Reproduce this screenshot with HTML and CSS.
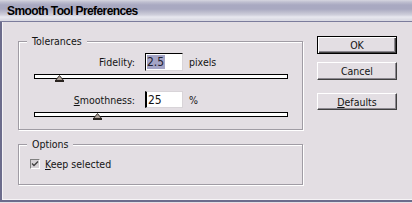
FILE: index.html
```html
<!DOCTYPE html>
<html>
<head>
<meta charset="utf-8">
<link rel="stylesheet" href="styles.css">
</head>
<body>
<div class="window">
  <div class="titlebar"><span class="title">Smooth Tool Preferences</span></div>
  <div class="body">
    <div class="main">
      <div class="group tol">
        <span class="glabel">Tolerances</span>
        <div class="row r1">
          <span class="lbl">Fidelity:</span>
          <div class="field f1"><span class="sel">2.5</span></div>
          <span class="unit">pixels</span>
        </div>
        <div class="slider s1">
          <div class="track"></div>
          <svg class="thumb" style="left:21px" width="9" height="7" viewBox="0 0 9 7"><path d="M4.5 0.5 L8.5 5.5 L0.5 5.5 Z" fill="#a89c94" stroke="#3a3430" stroke-width="1"/><rect x="0" y="5" width="9" height="2" fill="#2a2420"/></svg>
        </div>
        <div class="row r2">
          <span class="lbl"><u>S</u>moothness:</span>
          <div class="field f2">25</div>
          <span class="unit">%</span>
        </div>
        <div class="slider s2">
          <div class="track"></div>
          <svg class="thumb" style="left:59px" width="9" height="7" viewBox="0 0 9 7"><path d="M4.5 0.5 L8.5 5.5 L0.5 5.5 Z" fill="#a89c94" stroke="#3a3430" stroke-width="1"/><rect x="0" y="5" width="9" height="2" fill="#2a2420"/></svg>
        </div>
      </div>
      <div class="group opt">
        <span class="glabel">Options</span>
        <div class="check-row">
          <span class="checkbox"><svg width="8" height="8" viewBox="0 0 8 8"><path d="M1 3.5 L3 5.5 L7 1.5" fill="none" stroke="#404040" stroke-width="1.3"/></svg></span>
          <span class="ctext"><u>K</u>eep selected</span>
        </div>
      </div>
    </div>
    <div class="buttons">
      <div class="btn default">OK</div>
      <div class="btn cancel">Cancel</div>
      <div class="btn defaults"><u>D</u>efaults</div>
    </div>
  </div>
</div>
</body>
</html>
```
FILE: styles.css
```css
html, body {
  margin: 0;
  padding: 0;
  background: #e3dee3;
}
.window {
  width: 412px;
  height: 203px;
  background: #e3dee3;
  overflow: hidden;
  font-family: "DejaVu Sans Condensed", "DejaVu Sans", sans-serif;
  font-stretch: condensed;
  font-size: 10.5px;
  color: #141414;
}
.titlebar {
  height: 21px;
  border-bottom: 1px solid #7c7c9c;
  background: linear-gradient(#d6d6e0 0px, #bfbfd0 2px, #a9a9c1 5px, #a9a9c1 9px, #bcbccd 12px, #d0d0dc 15px, #e8e8ef 17px, #dadae3 20px);
  box-sizing: content-box;
}
.title {
  display: block;
  padding: 4px 0 0 7px;
  font-family: "Liberation Sans", sans-serif;
  font-stretch: normal;
  font-weight: bold;
  font-size: 12px;
  line-height: 15px;
  letter-spacing: -0.6px;
  color: #000;
}
.body {
  display: flex;
  height: 178px;
  border-left: 2px solid #6c6c8c;
  border-bottom: 2px solid #6c6c8c;
  box-shadow: inset 1px -1px 0 #f6f4f6;
  padding-left: 16px;
  box-sizing: content-box;
}
.main {
  display: flex;
  flex-direction: column;
  gap: 14px;
  padding-top: 19px;
  width: 285px;
}
.group {
  position: relative;
  border: 1px solid #a09ca4;
  box-shadow: 1px 1px 0 #fff, inset 1px 1px 0 #fff;
}
.glabel {
  position: absolute;
  top: -7px;
  left: 8px;
  padding: 0 5px;
  background: #e3dee3;
  line-height: 13px;
}
.tol {
  padding-bottom: 12px;
}
.row {
  display: flex;
  align-items: center;
}
.r1 {
  margin-top: 11px;
  height: 18px;
}
.r2 {
  margin-top: 12px;
  height: 17px;
}
.lbl {
  width: 116px;
  text-align: right;
}
.field {
  margin-left: 10px;
  width: 38px;
  height: 100%;
  box-sizing: border-box;
  background: #fff;
  display: flex;
  align-items: center;
  padding-left: 1px;
  font-size: 12px;
}
.f1 {
  border-top: 1px solid #000;
  border-left: 1px solid #000;
  border-right: 1px solid #d8d4d8;
  border-bottom: 1px solid #d8d4d8;
}
.f2 {
  border: 1px solid #d8d4d8;
  border-left: 2px solid #000;
  padding-left: 1px;
}
.sel {
  background: #a4a4c6;
  color: #202030;
  line-height: 14px;
  padding: 0 1px 0 0;
}
.unit {
  margin-left: 6px;
}
.slider {
  position: relative;
  margin-left: 15px;
  width: 254px;
  height: 5px;
}
.s1 {
  margin-top: 3px;
}
.s2 {
  margin-top: 4px;
}
.track {
  width: 100%;
  height: 5px;
  box-sizing: border-box;
  border: 1px solid #000;
  background: #fff;
}
.thumb {
  position: absolute;
  top: 1px;
  display: block;
}
.opt {
  padding-bottom: 14px;
}
.check-row {
  margin-top: 13px;
  margin-left: 11px;
  height: 12px;
  display: flex;
  align-items: center;
}
.checkbox {
  width: 10px;
  height: 10px;
  box-sizing: border-box;
  border-top: 1px solid #808080;
  border-left: 1px solid #808080;
  border-right: 1px solid #fff;
  border-bottom: 1px solid #fff;
  background: #d6d2d6;
  display: flex;
  align-items: center;
  justify-content: center;
}
.checkbox svg {
  display: block;
}
.ctext {
  margin-left: 5px;
}
.buttons {
  margin-left: 14px;
  padding-top: 14px;
  width: 80px;
  display: flex;
  flex-direction: column;
}
.btn {
  box-sizing: border-box;
  width: 80px;
  height: 18px;
  display: flex;
  align-items: center;
  justify-content: center;
  border-top: 1px solid #fff;
  border-left: 1px solid #fff;
  border-right: 1px solid #404040;
  border-bottom: 1px solid #404040;
  box-shadow: inset -1px -1px 0 #8c8890;
}
.default {
  border: 1px solid #000;
  box-shadow: inset 1px 1px 0 #fff, inset -1px -1px 0 #404040, inset -2px -2px 0 #8c8890;
}
.cancel {
  margin-top: 8px;
}
.defaults {
  margin-top: 13px;
  height: 17px;
}
```
